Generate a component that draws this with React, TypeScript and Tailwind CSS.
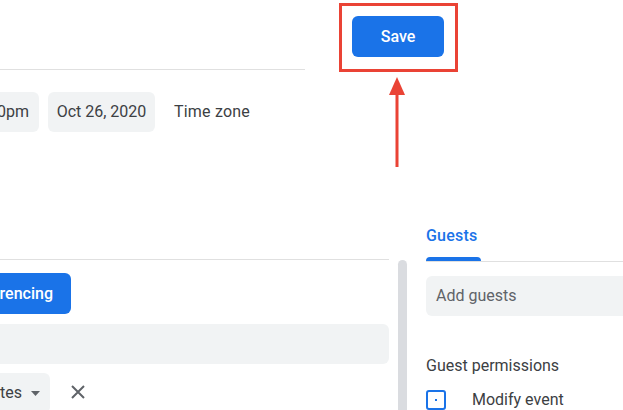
export default function App() {
  return (
    <main className="w-[623px] h-[410px] overflow-hidden bg-white font-['Roboto','Liberation_Sans',sans-serif] text-[#3c4043]">
      {/* top: title line, date chips, Save call-out */}
      <div className="flex h-[167px]">
        <div className="w-[305px]">
          <div className="h-[70px] border-b border-[#e0e0e0]"></div>
          <div className="mt-[22px] flex items-center">
            <div className="w-[39px] h-[40px] rounded-r-md bg-[#f1f3f4] flex items-center justify-end pr-[10px] text-[16px]">0pm</div>
            <div className="ml-[9px] h-[40px] w-[107px] rounded-md bg-[#f1f3f4] flex items-center justify-center text-[16px]">Oct 26, 2020</div>
            <div className="ml-[19px] text-[16px] tracking-[0.2px]">Time zone</div>
          </div>
        </div>
        <div className="ml-[34px] flex flex-col">
          <div className="mt-[3px] w-[119px] h-[69px] border-[3px] border-[#ea4335]">
            <button className="ml-[10px] mt-[10px] w-[92px] h-[41px] rounded-md bg-[#1a73e8] text-white text-[16px] font-medium">Save</button>
          </div>
          <svg className="mt-[5px] ml-[50px]" width="16" height="90" viewBox="0 0 16 90">
            <polygon points="8,0 0,18 16,18" fill="#ea4335" />
            <rect x="6.5" y="16" width="3" height="74" fill="#ea4335" />
          </svg>
        </div>
      </div>

      {/* lower: event details, scrollbar, guests */}
      <div className="mt-[53px] flex">
        <div className="w-[389px] mt-[39px] border-t border-[#e0e0e0]">
          <div className="mt-[13px] w-[71px] h-[41px] rounded-r-md bg-[#1a73e8] text-white text-[16px] font-medium flex items-center justify-end pr-[18px]">rencing</div>
          <div className="mt-[10px] h-[40px] rounded-r-md bg-[#f1f3f4]"></div>
          <div className="mt-[9px] flex items-center">
            <div className="w-[50px] h-[40px] rounded-r-md bg-[#f1f3f4] flex items-center text-[16px]">
              tes
              <svg className="ml-[9px]" width="9" height="5" viewBox="0 0 9 5">
                <polygon points="0,0 9,0 4.5,5" fill="#5f6368" />
              </svg>
            </div>
            <svg className="ml-[21px] mt-[-2px]" width="14" height="14" viewBox="0 0 14 14">
              <path d="M1 1 L13 13 M13 1 L1 13" stroke="#5f6368" strokeWidth="2" />
            </svg>
          </div>
        </div>
        <div className="ml-[9px] mt-[40px] w-[9px] h-[200px] rounded-full bg-[#dadce0]"></div>
        <div className="ml-[19px] flex-1">
          <div className="border-b border-[#e0e0e0] pt-[6px]">
            <div className="w-[55px]">
              <div className="text-[16px] leading-[20px] font-medium text-[#1a73e8] tracking-[0.2px]">Guests</div>
              <div className="mt-[11px] h-[4px] rounded-t bg-[#1a73e8]"></div>
            </div>
          </div>
          <div className="mt-[14px] h-[40px] rounded-l-md bg-[#f1f3f4] flex items-center pl-[10px] text-[16px] text-[#5f6368]">Add guests</div>
          <div className="mt-[40px] text-[16px] leading-[20px]">Guest permissions</div>
          <div className="mt-[14px] flex items-center">
            <div className="w-[20px] h-[20px] rounded-[3px] border-2 border-[#1a73e8] flex items-center justify-center">
              <div className="w-[2px] h-[2px] bg-[#1a73e8]"></div>
            </div>
            <div className="ml-[26px] text-[16px] leading-[20px]">Modify event</div>
          </div>
        </div>
      </div>
    </main>
  );
}
